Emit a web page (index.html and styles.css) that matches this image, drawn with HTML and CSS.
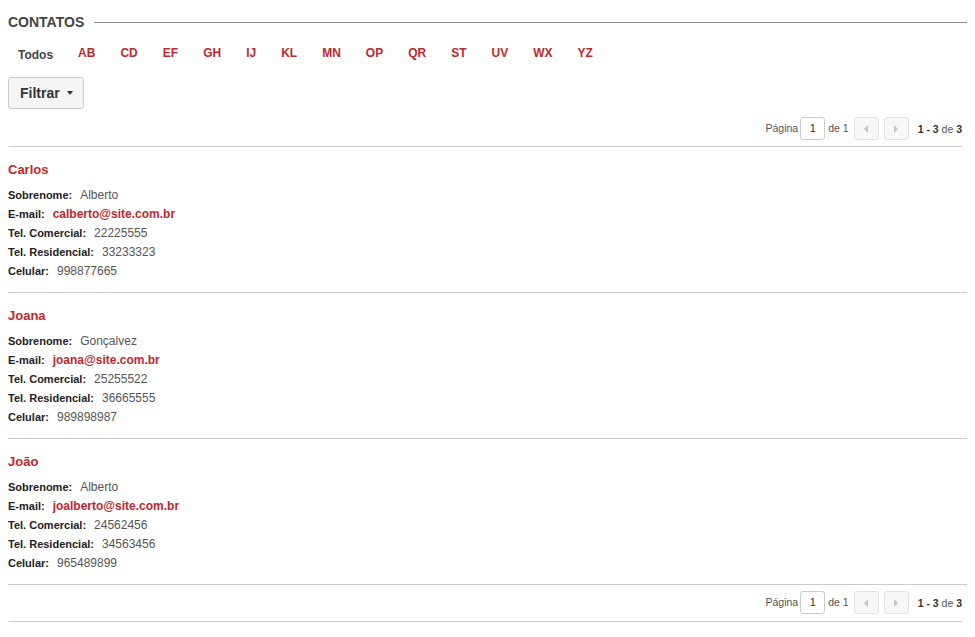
FILE: index.html
```html
<!DOCTYPE html>
<html lang="pt-BR">
<head>
<meta charset="utf-8">
<title>Contatos</title>
<link rel="stylesheet" href="styles.css">
</head>
<body>
<div class="page">
  <h2 class="section-title"><span>CONTATOS</span></h2>

  <nav class="alpha">
    <a class="alpha-all">Todos</a>
    <a class="alpha-link">AB</a>
    <a class="alpha-link">CD</a>
    <a class="alpha-link">EF</a>
    <a class="alpha-link">GH</a>
    <a class="alpha-link">IJ</a>
    <a class="alpha-link">KL</a>
    <a class="alpha-link">MN</a>
    <a class="alpha-link">OP</a>
    <a class="alpha-link">QR</a>
    <a class="alpha-link">ST</a>
    <a class="alpha-link">UV</a>
    <a class="alpha-link">WX</a>
    <a class="alpha-link">YZ</a>
  </nav>

  <div class="filter-row">
    <button class="btn-filter">Filtrar <span class="caret"></span></button>
  </div>

  <div class="pager">
    <span class="pager-text">Página</span>
    <span class="pager-input">1</span>
    <span class="pager-text">de 1</span>
    <span class="pager-btn"><span class="tri tri-left"></span></span>
    <span class="pager-btn"><span class="tri tri-right"></span></span>
    <span class="pager-count"><b>1 - 3</b> de <b>3</b></span>
  </div>

  <div class="contact">
    <h3 class="contact-name">Carlos</h3>
    <div class="field"><span class="label">Sobrenome:</span><span class="value">Alberto</span></div>
    <div class="field"><span class="label">E-mail:</span><a class="value email">calberto@site.com.br</a></div>
    <div class="field"><span class="label">Tel. Comercial:</span><span class="value">22225555</span></div>
    <div class="field"><span class="label">Tel. Residencial:</span><span class="value">33233323</span></div>
    <div class="field"><span class="label">Celular:</span><span class="value">998877665</span></div>
  </div>

  <div class="contact">
    <h3 class="contact-name">Joana</h3>
    <div class="field"><span class="label">Sobrenome:</span><span class="value">Gonçalvez</span></div>
    <div class="field"><span class="label">E-mail:</span><a class="value email">joana@site.com.br</a></div>
    <div class="field"><span class="label">Tel. Comercial:</span><span class="value">25255522</span></div>
    <div class="field"><span class="label">Tel. Residencial:</span><span class="value">36665555</span></div>
    <div class="field"><span class="label">Celular:</span><span class="value">989898987</span></div>
  </div>

  <div class="contact">
    <h3 class="contact-name">João</h3>
    <div class="field"><span class="label">Sobrenome:</span><span class="value">Alberto</span></div>
    <div class="field"><span class="label">E-mail:</span><a class="value email">joalberto@site.com.br</a></div>
    <div class="field"><span class="label">Tel. Comercial:</span><span class="value">24562456</span></div>
    <div class="field"><span class="label">Tel. Residencial:</span><span class="value">34563456</span></div>
    <div class="field"><span class="label">Celular:</span><span class="value">965489899</span></div>
  </div>

  <div class="pager pager-bottom">
    <span class="pager-text">Página</span>
    <span class="pager-input">1</span>
    <span class="pager-text">de 1</span>
    <span class="pager-btn"><span class="tri tri-left"></span></span>
    <span class="pager-btn"><span class="tri tri-right"></span></span>
    <span class="pager-count"><b>1 - 3</b> de <b>3</b></span>
  </div>
</div>
</body>
</html>
```

FILE: styles.css
```css
* { box-sizing: border-box; }

html, body {
  margin: 0;
  padding: 0;
  background: #fff;
}

body {
  font-family: "Liberation Sans", Arial, sans-serif;
  color: #555;
}

.page {
  padding: 14px 8px 0 8px;
}

.section-title {
  display: flex;
  align-items: center;
  margin: 0;
  font-size: 14px;
  line-height: 16px;
  font-weight: bold;
  color: #444;
}

.section-title::after {
  content: "";
  flex: 1;
  height: 1px;
  background: #8a8a8a;
  margin-left: 10px;
  margin-top: 1px;
}

.alpha {
  display: flex;
  align-items: flex-start;
  gap: 25px;
  margin-top: 15px;
  padding-left: 10px;
  font-size: 12px;
  line-height: 16px;
  font-weight: bold;
}

.alpha-all {
  color: #444;
  margin-top: 2px;
}

.alpha-link {
  color: #c1272d;
}

.filter-row {
  display: flex;
  margin-top: 14px;
}

.btn-filter {
  display: flex;
  align-items: center;
  height: 32px;
  margin: 0;
  padding: 0 10px 0 11px;
  background: #f5f5f5;
  border: 1px solid #ccc;
  border-radius: 3px;
  font-family: "Liberation Sans", Arial, sans-serif;
  font-size: 14px;
  font-weight: bold;
  color: #333;
}

.caret {
  display: inline-block;
  width: 0;
  height: 0;
  margin-left: 7px;
  border-left: 3px solid transparent;
  border-right: 3px solid transparent;
  border-top: 4px solid #333;
}

.pager {
  display: flex;
  justify-content: flex-end;
  align-items: center;
  margin: 2px 5px 0 1px;
  padding: 6px 0;
  border-bottom: 1px solid #ccc;
  font-size: 10.5px;
  color: #555;
}

.pager-bottom {
  margin-top: 0;
  padding-bottom: 7px;
}

.pager-text {
  line-height: 23px;
}

.pager-input {
  width: 25px;
  height: 23px;
  margin: 0 3px 0 2px;
  border: 1px solid #ccc;
  border-radius: 3px;
  text-align: center;
  line-height: 21px;
  font-size: 11px;
  color: #333;
  background: #fff;
}

.pager-btn {
  display: flex;
  align-items: center;
  justify-content: center;
  width: 25px;
  height: 23px;
  margin-left: 5px;
  border: 1px solid #e2e2e2;
  border-radius: 3px;
  background: #f7f7f7;
}

.tri {
  width: 0;
  height: 0;
  border-top: 4px solid transparent;
  border-bottom: 4px solid transparent;
}

.tri-left {
  border-right: 4px solid #c4c4c4;
}

.tri-right {
  border-left: 4px solid #c4c4c4;
}

.pager-count {
  margin-left: 9px;
  color: #555;
}

.pager-count b {
  color: #333;
}

.contact {
  padding: 14px 0 11px 0;
  border-bottom: 1px solid #ccc;
}

.contact-name {
  margin: 0 0 7px 0;
  font-size: 13px;
  line-height: 18px;
  font-weight: bold;
  color: #c1272d;
}

.field {
  display: flex;
  align-items: baseline;
  height: 19px;
  line-height: 19px;
}

.label {
  font-size: 11px;
  font-weight: bold;
  color: #222;
  margin-right: 8px;
}

.value {
  font-size: 12px;
  color: #555;
}

.email {
  color: #c1272d;
  font-weight: bold;
}
```
